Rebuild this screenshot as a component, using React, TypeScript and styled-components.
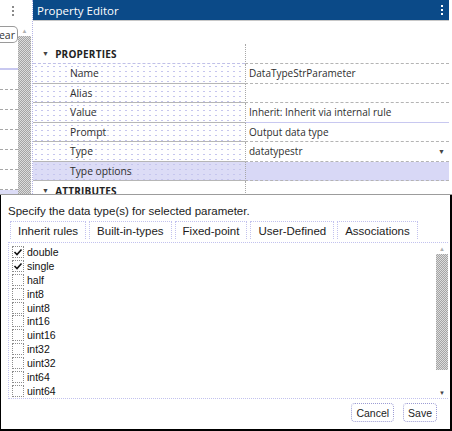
import React from 'react';
import styled, { createGlobalStyle } from 'styled-components';

const GlobalStyle = createGlobalStyle`
  html, body {
    margin: 0;
    padding: 0;
    background: #ffffff;
  }
  body {
    width: 452px;
    height: 431px;
    overflow: hidden;
  }
  * {
    box-sizing: border-box;
  }
`;

const dots = `
  background-image: radial-gradient(circle, #c6c6ee 0.7px, transparent 0.9px);
  background-size: 6px 5px;
`;

const checker = (a: string, b: string) => `
  background: repeating-conic-gradient(${a} 0 25%, ${b} 0 50%) 0 0 / 2px 2px;
`;

const Frame = styled.div`
  width: 452px;
  height: 431px;
  display: flex;
  flex-direction: column;
  overflow: hidden;
`;

const TopArea = styled.div`
  height: 195px;
  flex-shrink: 0;
  display: flex;
  border-bottom: 1px solid #9c9c9c;
  overflow: hidden;
`;

/* left docked strip */
const SideStrip = styled.div`
  width: 33px;
  flex-shrink: 0;
  display: flex;
  flex-direction: column;
  border-right: 1px dotted #b4b4e6;
`;

const SideHeader = styled.div`
  height: 22px;
  display: flex;
  align-items: center;
  padding-left: 12px;
`;

const Kebab = styled.div<{ $color: string }>`
  display: flex;
  flex-direction: column;
  gap: 2px;
  span {
    width: 2px;
    height: 2px;
    background: ${p => p.$color};
  }
`;

const SideBody = styled.div`
  flex: 1;
  display: flex;
  min-height: 0;
`;

const SideList = styled.div`
  width: 18px;
  flex-shrink: 0;
  display: flex;
  flex-direction: column;
  overflow: hidden;
`;

const ClearButton = styled.div`
  margin-top: 4px;
  height: 17px;
  width: 18px;
  flex-shrink: 0;
  display: flex;
  align-items: center;
  justify-content: flex-end;
  padding-right: 2px;
  border: 1px solid #9a9a9a;
  border-left: none;
  border-radius: 0 5px 5px 0;
  overflow: hidden;
  white-space: nowrap;
  font: 10.5px 'Open Sans', sans-serif;
  color: #333;
  span {
    flex-shrink: 0;
  }
`;

const SideSpacer = styled.div`
  height: 27px;
  flex-shrink: 0;
  border-bottom: 2px solid #c8c8f0;
`;

const SideRow = styled.div<{ $selected?: boolean }>`
  height: 20px;
  flex-shrink: 0;
  border-bottom: 1px dashed #a8a8a8;
  background: ${p => (p.$selected ? '#dcdcf6' : 'transparent')};
`;

const ScrollBar = styled.div<{ $width: number; $top?: number }>`
  width: ${p => p.$width}px;
  flex-shrink: 0;
  display: flex;
  flex-direction: column;
  align-items: stretch;
  padding-top: ${p => p.$top ?? 0}px;
`;

const ScrollArrow = styled.div<{ $dark?: boolean }>`
  height: 11px;
  flex-shrink: 0;
  display: flex;
  align-items: center;
  justify-content: center;
  color: ${p => (p.$dark ? '#444' : '#b0b0b0')};
  font-size: 6px;
  line-height: 1;
`;

const ScrollThumb = styled.div<{ $grow?: boolean; $height?: number }>`
  ${checker('#a4a4a4', '#dcdcdc')}
  ${p => (p.$grow ? 'flex: 1;' : `height: ${p.$height}px; flex-shrink: 0;`)}
`;

const ScrollTrack = styled.div`
  flex: 1;
`;

/* property editor */
const Panel = styled.div`
  flex: 1;
  min-width: 0;
  display: flex;
  flex-direction: column;
  font-family: 'Open Sans', 'Noto Sans', sans-serif;
  color: #2e2e2e;
`;

const TitleBar = styled.div`
  height: 21px;
  flex-shrink: 0;
  margin-right: 3px;
  padding: 0 6px 0 4px;
  display: flex;
  align-items: center;
  justify-content: space-between;
  background: #0b4a88;
  color: #ffffff;
  font-size: 11.5px;
  border-bottom: 1px solid #c8c8c8;
`;

const BlankGap = styled.div`
  height: 23px;
  flex-shrink: 0;
`;

const PropRow = styled.div<{ $height: number }>`
  height: ${p => p.$height}px;
  flex-shrink: 0;
  display: grid;
  grid-template-columns: 212px 1fr;
  margin-right: 3px;
`;

const SectionCell = styled.div`
  display: flex;
  align-items: center;
  gap: 6px;
  padding-left: 9px;
  font-weight: 700;
  font-size: 10px;
  letter-spacing: 0.2px;
  color: #222;
  border-bottom: 1px dashed #c0c0e8;
`;

const LabelCell = styled.div<{ $selected?: boolean }>`
  display: flex;
  align-items: center;
  padding-left: 37px;
  font-size: 10.3px;
  border-bottom: 1px solid #b6b6b6;
  background-color: ${p => (p.$selected ? '#dcdcf6' : '#ffffff')};
  ${dots}
`;

const ValueCell = styled.div<{ $selected?: boolean; $accent?: boolean }>`
  display: flex;
  align-items: center;
  justify-content: space-between;
  padding: 0 4px 0 3px;
  font-size: 10px;
  border-left: 1px dotted #a8a8a8;
  border-bottom: 1px ${p => (p.$accent ? 'solid #c8c8f0' : 'dashed #b4b4b4')};
  background: ${p => (p.$selected ? '#d8d8f6' : '#ffffff')};
`;

const Caret = styled.span`
  font-size: 7px;
  color: #444;
`;

/* bottom dialog */
const Dialog = styled.div`
  flex: 1;
  display: flex;
  flex-direction: column;
  padding: 9px 2px 0 7px;
  border-left: 1px solid #000;
  border-right: 2px solid #000;
  border-bottom: 2px solid #000;
  font-family: 'Liberation Sans', Arial, sans-serif;
  color: #1c1c1c;
`;

const Hint = styled.div`
  font-size: 11.5px;
  line-height: 14px;
  height: 14px;
`;

const TabRow = styled.div`
  display: flex;
  gap: 3px;
  margin: 3px 0 0 2px;
`;

const Tab = styled.div`
  height: 18px;
  padding: 0 7px;
  display: flex;
  align-items: center;
  font-size: 11.5px;
  border: 1px dotted #c2c2ee;
  border-bottom: none;
`;

const ListBox = styled.div`
  margin-top: 3px;
  height: 157px;
  display: flex;
  border-left: 1px dotted #c2c2ee;
  border-top: 1px dotted #c2c2ee;
  border-bottom: 1px dotted #c2c2ee;
`;

const Items = styled.div`
  flex: 1;
  padding: 2px 0 0 3px;
  display: flex;
  flex-direction: column;
`;

const Item = styled.label`
  height: 14px;
  display: flex;
  align-items: center;
  gap: 3px;
  font-size: 10.5px;
  color: #111;
`;

const Box = styled.span`
  width: 12px;
  height: 12px;
  display: flex;
  align-items: center;
  justify-content: center;
  border: 1px dotted #8c8c8c;
  background: #fff;
`;

const Buttons = styled.div`
  display: flex;
  justify-content: flex-end;
  gap: 9px;
  margin: 4px 11px 0 0;
`;

const Button = styled.button`
  height: 19px;
  padding: 0 4px;
  border: 1px dotted #9c9cd4;
  border-radius: 4px;
  background: #fff;
  font: 10.5px 'Liberation Sans', Arial, sans-serif;
  color: #1c1c1c;
`;

const Check = () => (
  <svg width="10" height="10" viewBox="0 0 10 10">
    <path d="M1.5 5 L4 7.5 L8.5 2.5" fill="none" stroke="#111" strokeWidth="1.6" />
  </svg>
);

const properties = [
  { label: 'Name', value: 'DataTypeStrParameter' },
  { label: 'Alias', value: '' },
  { label: 'Value', value: 'Inherit: Inherit via internal rule', accent: true },
  { label: 'Prompt', value: 'Output data type' },
  { label: 'Type', value: 'datatypestr', dropdown: true },
  { label: 'Type options', value: '', selected: true },
];

const tabs = ['Inherit rules', 'Built-in-types', 'Fixed-point', 'User-Defined', 'Associations'];

const types = [
  { name: 'double', checked: true },
  { name: 'single', checked: true },
  { name: 'half' },
  { name: 'int8' },
  { name: 'uint8' },
  { name: 'int16' },
  { name: 'uint16' },
  { name: 'int32' },
  { name: 'uint32' },
  { name: 'int64' },
  { name: 'uint64' },
];

const App: React.FC = () => {
  return (
    <>
      <GlobalStyle />
      <Frame>
        <TopArea>
          <SideStrip>
            <SideHeader>
              <Kebab $color="#8a8a8a">
                <span />
                <span />
                <span />
              </Kebab>
            </SideHeader>
            <SideBody>
              <SideList>
                <ClearButton>
                  <span>Clear</span>
                </ClearButton>
                <SideSpacer />
                <SideRow />
                <SideRow />
                <SideRow />
                <SideRow />
                <SideRow />
                <SideRow />
                <SideRow $selected />
              </SideList>
              <ScrollBar $width={13} $top={3}>
                <ScrollArrow>▲</ScrollArrow>
                <ScrollThumb $grow />
              </ScrollBar>
            </SideBody>
          </SideStrip>

          <Panel>
            <TitleBar>
              <span>Property Editor</span>
              <Kebab $color="#ffffff">
                <span />
                <span />
                <span />
              </Kebab>
            </TitleBar>
            <BlankGap />
            <PropRow $height={20}>
              <SectionCell>
                <Caret>▼</Caret>
                PROPERTIES
              </SectionCell>
              <ValueCell />
            </PropRow>
            {properties.map(p => (
              <PropRow $height={19.5} key={p.label}>
                <LabelCell $selected={p.selected}>{p.label}</LabelCell>
                <ValueCell $selected={p.selected} $accent={p.accent}>
                  <span>{p.value}</span>
                  {p.dropdown && <Caret>▼</Caret>}
                </ValueCell>
              </PropRow>
            ))}
            <PropRow $height={20}>
              <SectionCell>
                <Caret>▼</Caret>
                ATTRIBUTES
              </SectionCell>
              <ValueCell />
            </PropRow>
          </Panel>
        </TopArea>

        <Dialog>
          <Hint>Specify the data type(s) for selected parameter.</Hint>
          <TabRow>
            {tabs.map(t => (
              <Tab key={t}>{t}</Tab>
            ))}
          </TabRow>
          <ListBox>
            <Items>
              {types.map(t => (
                <Item key={t.name}>
                  <Box>{t.checked && <Check />}</Box>
                  {t.name}
                </Item>
              ))}
            </Items>
            <ScrollBar $width={12}>
              <ScrollArrow>▲</ScrollArrow>
              <ScrollThumb $height={116} />
              <ScrollTrack />
              <ScrollArrow $dark>▼</ScrollArrow>
            </ScrollBar>
          </ListBox>
          <Buttons>
            <Button>Cancel</Button>
            <Button>Save</Button>
          </Buttons>
        </Dialog>
      </Frame>
    </>
  );
};

export default App;
